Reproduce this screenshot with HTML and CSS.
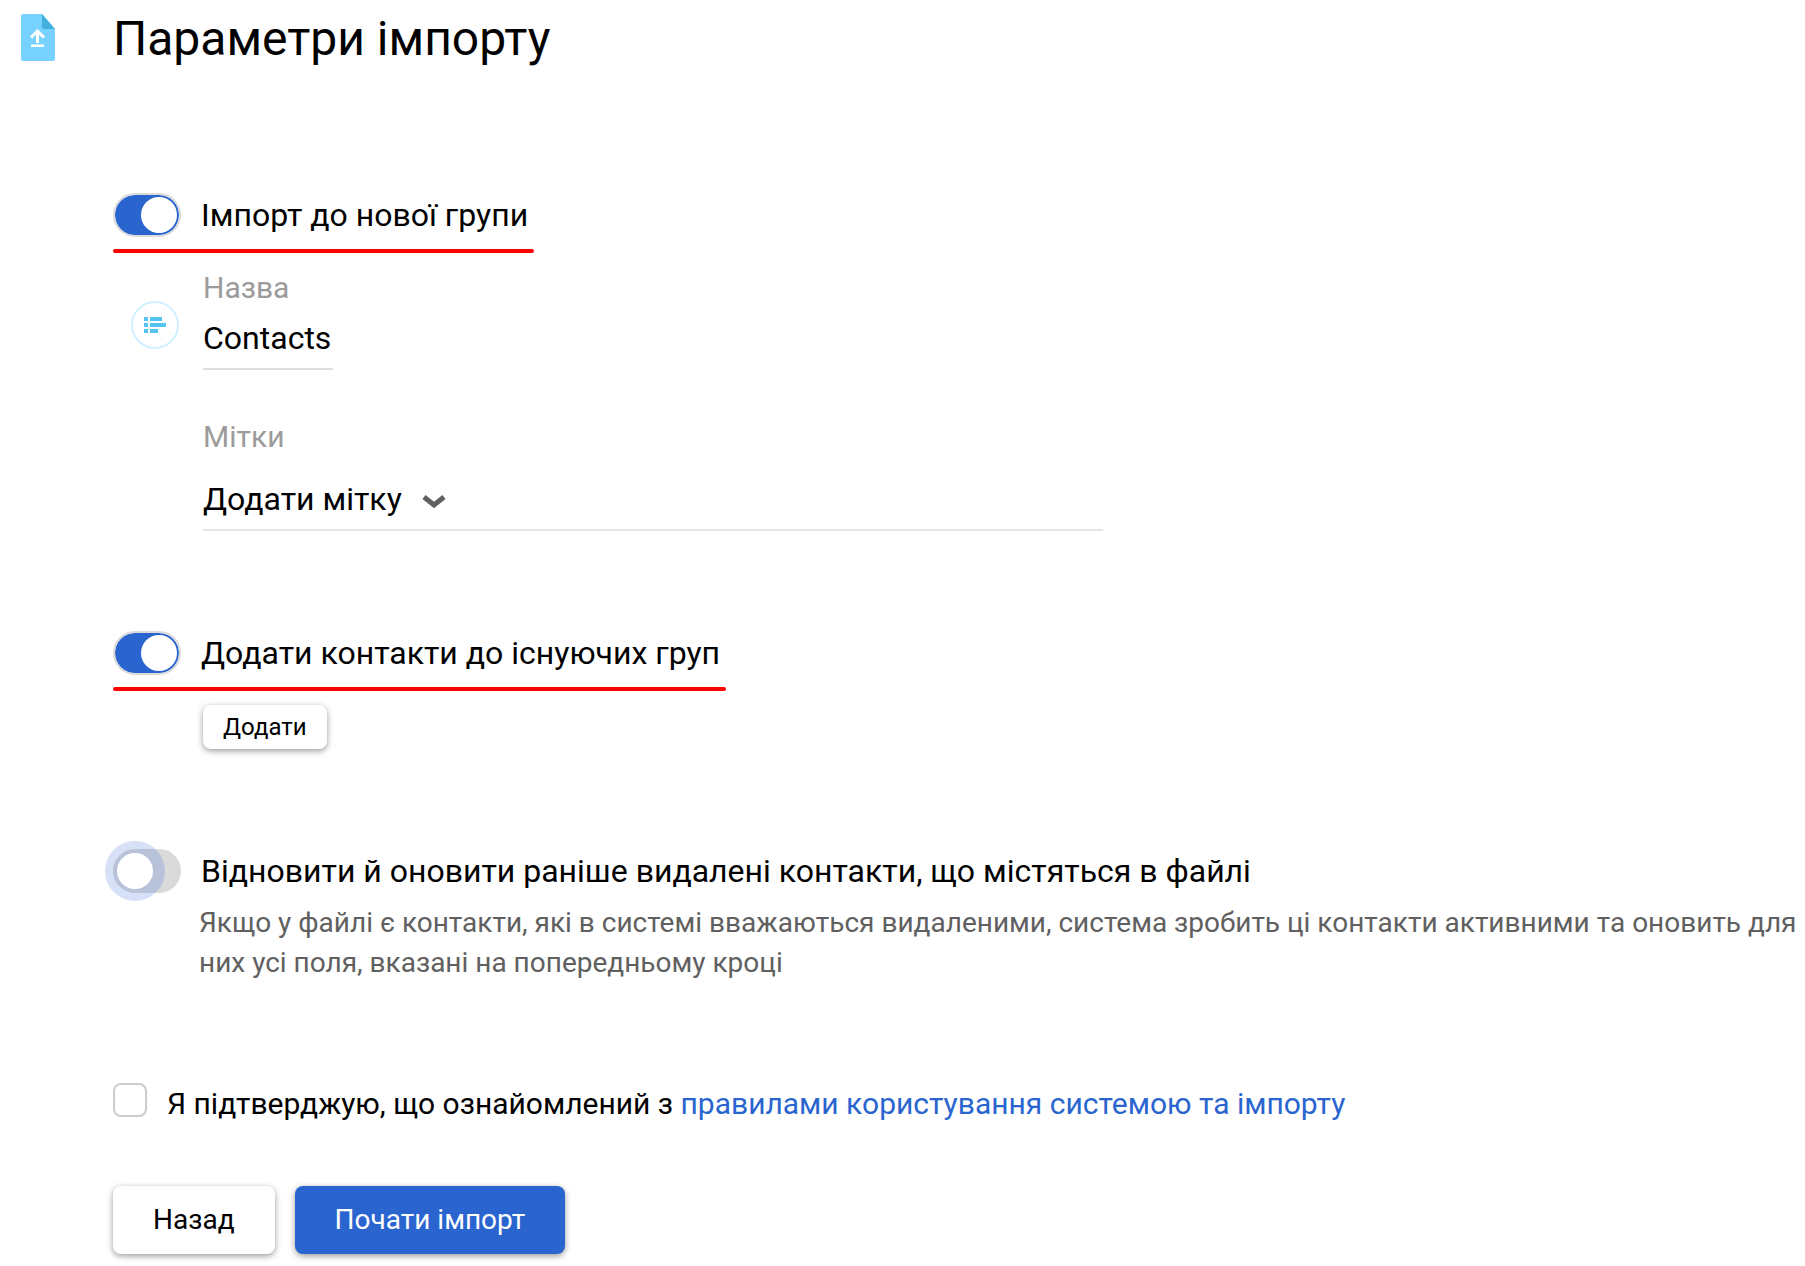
FILE: index.html
```html
<!DOCTYPE html>
<html lang="uk">
<head>
    <meta charset="UTF-8">
    <meta name="viewport" content="width=device-width, initial-scale=1.0">
    <title>Параметри імпорту</title>
    <link rel="stylesheet" href="styles.css">
</head>
<body>
    <div class="page">
        <svg class="file-icon" viewBox="0 0 34 47" aria-hidden="true">
            <path d="M2 0H21L34 15V45a2 2 0 0 1-2 2H2a2 2 0 0 1-2-2V2a2 2 0 0 1 2-2z" fill="#78d2ff"/>
            <path d="M21 0L34 15H23a2 2 0 0 1-2-2z" fill="#43afdd"/>
            <path d="M16.500 29V17M10 23.500l6.500-6.500 6.500 6.500" fill="none" stroke="#fff" stroke-width="3"/>
            <path d="M10 30.500h13v2.500H10z" fill="#fff"/>
        </svg>

        <form class="import-form">
            <h1>Параметри імпорту</h1>

            <!-- Нова група -->
            <section class="section">
                <div class="option marked">
                    <input type="checkbox" class="toggle" id="newGroup" checked>
                    <label for="newGroup">Імпорт до нової групи</label>
                </div>
                <div class="fields">
                    <svg class="list-icon" viewBox="0 0 48 48" aria-hidden="true">
                        <circle cx="24" cy="24" r="23" fill="#fff" stroke="#d2f0ff" stroke-width="2"/>
                        <path d="M13 16h4v4h-4zM19 16h12v4H19zM13 22h4v4h-4zM19 22h16v4H19zM13 28h4v4h-4zM19 28h8v4h-8z" fill="#55c3f0"/>
                    </svg>
                    <div class="field-list">
                        <div class="field">
                            <label for="groupName">Назва</label>
                            <input type="text" class="name-input" id="groupName" value="Contacts">
                        </div>
                        <div class="field">
                            <label for="groupTag">Мітки</label>
                            <div class="select-line">
                                <select id="groupTag">
                                    <option>Додати мітку</option>
                                </select>
                                <svg class="chevron" viewBox="0 0 24 14" aria-hidden="true">
                                    <path d="M2 2l10 8 10-8" fill="none" stroke="#606060" stroke-width="5"/>
                                </svg>
                            </div>
                        </div>
                    </div>
                </div>
            </section>

            <!-- Існуючі групи -->
            <section class="section">
                <div class="option marked">
                    <input type="checkbox" class="toggle" id="existingGroups" checked>
                    <label for="existingGroups">Додати контакти до існуючих груп</label>
                </div>
                <button type="button" class="btn btn-small">Додати</button>
            </section>

            <!-- Видалені контакти -->
            <section class="section">
                <div class="option">
                    <input type="checkbox" class="toggle focused" id="restore">
                    <label for="restore">Відновити й оновити раніше видалені контакти, що містяться в файлі</label>
                </div>
                <p class="hint">Якщо у файлі є контакти, які в системі вважаються видаленими, система зробить ці контакти активними та оновить для них усі поля, вказані на попередньому кроці</p>
            </section>

            <div class="confirm">
                <input type="checkbox" class="check" id="confirm">
                <label for="confirm">Я підтверджую, що ознайомлений з <a href="#">правилами користування системою та імпорту</a></label>
            </div>

            <div class="actions">
                <button type="button" class="btn">Назад</button>
                <button type="submit" class="btn btn-primary">Почати імпорт</button>
            </div>
        </form>
    </div>
</body>
</html>
```

FILE: styles.css
```css
* {
    box-sizing: border-box;
}

body {
    margin: 0;
    background: #fff;
    color: #000;
    font-family: Roboto, "Noto Sans", sans-serif;
    font-size: 32px;
    line-height: 44px;
}

input, select, button {
    margin: 0;
    font: inherit;
    color: inherit;
}

.page {
    display: flex;
    align-items: flex-start;
    gap: 58px;
    padding: 11px 4px 10px 21px;
}

.file-icon {
    flex: none;
    width: 34px;
    height: 47px;
    margin-top: 3px;
}

.import-form {
    flex: 1;
    display: flex;
    flex-direction: column;
}

h1 {
    margin: 0 0 126px;
    font-size: 48px;
    line-height: 56px;
    font-weight: 400;
}

.section {
    margin-bottom: 100px;
}

.option {
    display: grid;
    grid-template-columns: 68px auto;
    align-items: center;
    column-gap: 20px;
    width: fit-content;
}

.marked label {
    padding-right: 6px;
}

/* red line under the option */
.marked::after {
    content: "";
    grid-column: 1 / -1;
    height: 4px;
    margin-top: 12px;
    border-radius: 2px;
    background: #f00;
}

.toggle {
    appearance: none;
    display: flex;
    align-items: center;
    width: 68px;
    height: 44px;
    padding: 0 2px;
    border: 2px solid #dadada;
    border-radius: 22px;
    background: #dadada;
    cursor: pointer;
}

.toggle::before {
    content: "";
    width: 36px;
    height: 36px;
    border-radius: 50%;
    background: #fff;
}

.toggle:checked {
    justify-content: flex-end;
    background: #2a65cf;
    background-clip: padding-box;
}

.toggle.focused::before {
    box-shadow: 0 0 0 12px rgba(50, 105, 220, 0.2);
}

.fields {
    display: flex;
    align-items: flex-start;
    gap: 24px;
    margin: 17px 0 0 18px;
}

.list-icon {
    flex: none;
    width: 48px;
    height: 48px;
    margin-top: 31px;
}

.field-list {
    flex: 1;
    display: flex;
    flex-direction: column;
    gap: 49px;
    max-width: 900px;
}

.field {
    display: flex;
    flex-direction: column;
    align-items: flex-start;
    gap: 10px;
}

.field label {
    color: #9b9b9b;
    font-size: 30px;
    line-height: 36px;
}

.name-input {
    width: 130px;
    height: 54px;
    padding: 0 0 8px;
    border: 0;
    border-bottom: 2px solid #dcdfdf;
    background: none;
}

.select-line {
    display: flex;
    align-items: center;
    align-self: stretch;
    gap: 20px;
    padding: 12px 0 8px;
    border-bottom: 2px solid #e6e6e6;
}

select {
    appearance: none;
    height: 44px;
    padding: 0;
    border: 0;
    background: none;
}

.chevron {
    width: 24px;
    height: 14px;
    margin-top: 6px;
}

.btn {
    height: 68px;
    padding: 0 40px;
    border: 0;
    border-radius: 8px;
    background: #fff;
    box-shadow: 0 2px 6px rgba(0, 0, 0, 0.4);
    font-size: 28px;
    line-height: 40px;
    cursor: pointer;
}

.btn-small {
    display: block;
    height: 44px;
    margin: 14px 0 0 90px;
    padding: 0 20px;
    font-size: 24px;
}

.btn-primary {
    background: #2a65cf;
    color: #fff;
}

.hint {
    margin: 10px 0 0 86px;
    color: #606060;
    font-size: 28px;
    line-height: 40px;
}

.confirm {
    display: flex;
    align-items: flex-start;
    gap: 20px;
    margin-bottom: 61px;
    font-size: 30px;
    line-height: 42px;
}

.check {
    appearance: none;
    flex: none;
    width: 34px;
    height: 34px;
    border: 2px solid #ccc;
    border-radius: 8px;
    background: #fff;
}

a {
    color: #2a65cf;
    text-decoration: none;
}

.actions {
    display: flex;
    gap: 20px;
}
```
